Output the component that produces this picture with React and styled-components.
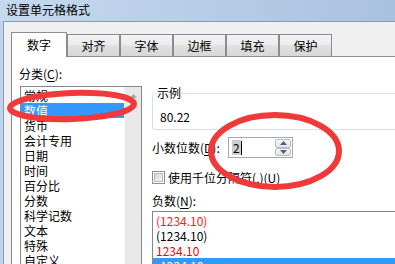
import React from "react"
import styled, { createGlobalStyle } from "styled-components"

const GlobalStyle = createGlobalStyle`
	html, body {
		margin: 0;
		padding: 0;
	}
	body {
		font-family: "Noto Sans CJK SC", "Noto Sans", sans-serif;
		font-size: 12px;
		color: #000;
	}
`

const Window = styled.div`
	position: relative;
	width: 395px;
	height: 264px;
	overflow: hidden;
	display: flex;
	flex-direction: column;
	background: #bfd4ec;
`

const TitleBar = styled.div`
	height: 21px;
	box-sizing: border-box;
	padding: 0 0 2px 6px;
	display: flex;
	align-items: center;
	line-height: 16px;
	background: linear-gradient(to right, #c6d9ee, #b6cce6 55%, #a9c2df);
`

const Client = styled.div`
	flex: 1;
	min-height: 0;
	margin-left: 3px;
	border-left: 1px solid #8a99ab;
	border-top: 1px solid #8a99ab;
	background: #f0f0f0;
	padding: 10px 0 0 7px;
	display: flex;
	flex-direction: column;
`

const TabRow = styled.div`
	position: relative;
	z-index: 1;
	height: 24px;
	display: flex;
	align-items: flex-end;
`

const Tab = styled.div`
	box-sizing: border-box;
	width: ${p => (p.$active ? 56 : 53)}px;
	height: ${p => (p.$active ? 25 : 22)}px;
	margin-bottom: ${p => (p.$active ? -1 : 0)}px;
	border: 1px solid #898c95;
	border-bottom: none;
	background: ${p =>
		p.$active ? "#fff" : "linear-gradient(#f4f4f4, #ececec 45%, #dfdfdf 55%, #d8d8d8)"};
	display: flex;
	align-items: center;
	justify-content: center;
	line-height: 16px;
`

const Panel = styled.div`
	flex: 1;
	min-height: 0;
	background: #fff;
	border-top: 1px solid #898c95;
	border-left: 1px solid #898c95;
	padding: 9px 0 0 7px;
	display: grid;
	grid-template-columns: 123px 280px;
	column-gap: 10px;
	align-items: start;
`

const Column = styled.div`
	display: flex;
	flex-direction: column;
	padding-top: ${p => p.$top || 0}px;
`

const Label = styled.div`
	line-height: 16px;
	white-space: nowrap;
	margin-top: ${p => p.$gap || 0}px;
`

const Key = styled.span`
	text-decoration: underline;
	text-underline-offset: 2px;
`

const CategoryBox = styled.div`
	box-sizing: border-box;
	width: 122px;
	height: 190px;
	margin: 4px 0 0 1px;
	border: 1px solid #828790;
	display: flex;
`

const Items = styled.div`
	flex: 1;
	padding-top: 1px;
`

const Item = styled.div`
	height: 15px;
	line-height: 15px;
	padding-left: 3px;
	white-space: nowrap;
	background: ${p => (p.$selected ? "#3399ff" : "transparent")};
	color: ${p => (p.$selected ? "#fff" : p.$color || "#000")};
`

const ScrollBar = styled.div`
	width: 17px;
	background: #e9e9e9;
	border-left: 1px solid #f4f4f4;
	box-sizing: border-box;
`

const ScrollButton = styled.div`
	height: 17px;
	display: flex;
	align-items: center;
	justify-content: center;
`

const Group = styled.fieldset`
	margin: 0;
	padding: 0 0 4px 3px;
	border: 1px solid #d5dfe5;
	border-radius: 3px;
	min-width: 0;
`

const Legend = styled.legend`
	padding: 0 1px;
	line-height: 16px;
	font-size: 12px;
`

const SampleValue = styled.div`
	padding: 8px 0 0 4px;
	line-height: 16px;
`

const FieldRow = styled.div`
	margin-top: ${p => p.$gap || 0}px;
	height: ${p => p.$h}px;
	display: flex;
	align-items: center;
`

const FieldLabel = styled.div`
	width: 76px;
	line-height: 16px;
	white-space: nowrap;
`

const SpinBox = styled.div`
	box-sizing: border-box;
	width: 65px;
	height: 21px;
	border: 1px solid #a6a8ae;
	display: flex;
	background: #fff;
`

const SpinValue = styled.div`
	flex: 1;
	padding-left: 3px;
	display: flex;
	align-items: center;
	line-height: 15px;
`

const Selected = styled.span`
	background: #cdcdcd;
	padding: 0 1px;
`

const Caret = styled.span`
	width: 1px;
	height: 14px;
	background: #000;
`

const SpinButtons = styled.div`
	width: 16px;
	padding: 1px 1px 1px 0;
	display: flex;
	flex-direction: column;
	gap: 0;
`

const SpinButton = styled.div`
	flex: 1;
	box-sizing: border-box;
	border: 1px solid #b8bcc4;
	border-radius: 2px;
	background: linear-gradient(#f6f6f6, #e4e4e4);
	display: flex;
	align-items: center;
	justify-content: center;
`

const CheckBox = styled.div`
	box-sizing: border-box;
	width: 13px;
	height: 13px;
	border: 1px solid #8e8f8f;
	padding: 1px;
	background: #fff;
	margin-right: 3px;
`

const CheckFill = styled.div`
	box-sizing: border-box;
	width: 100%;
	height: 100%;
	border: 1px solid #b8bcc2;
	background: linear-gradient(135deg, #d6d6d6, #f6f6f6);
`

const NegativeBox = styled.div`
	margin-top: 2px;
	height: 60px;
	border: 1px solid #828790;
	border-right: none;
	padding-top: 1px;
`

const Annotation = styled.svg`
	position: absolute;
	top: 0;
	left: 0;
	pointer-events: none;
`

const categories = ["常规", "数值", "货币", "会计专用", "日期", "时间", "百分比", "分数", "科学记数", "文本", "特殊", "自定义"]
const tabs = ["数字", "对齐", "字体", "边框", "填充", "保护"]
const negatives = [
	{ text: "(1234.10)", color: "#ff1a1a" },
	{ text: "(1234.10)", color: "#000" },
	{ text: "1234.10", color: "#ff0000" },
	{ text: "-1234.10", selected: true }
]

const Arrow = ({ up, color }) => (
	<svg width="7" height="4" viewBox="0 0 7 4">
		<path d={up ? "M0 4 L3.5 0 L7 4 Z" : "M0 0 L3.5 4 L7 0 Z"} fill={color} />
	</svg>
)

export default function App() {
	return (
		<Window>
			<GlobalStyle />
			<TitleBar>设置单元格格式</TitleBar>
			<Client>
				<TabRow>
					{tabs.map((t, i) => (
						<Tab key={t} $active={i === 0}>{t}</Tab>
					))}
				</TabRow>
				<Panel>
					<Column>
						<Label>分类(<Key>C</Key>):</Label>
						<CategoryBox>
							<Items>
								{categories.map(c => (
									<Item key={c} $selected={c === "数值"}>{c}</Item>
								))}
							</Items>
							<ScrollBar>
								<ScrollButton>
									<Arrow up color="#a3a3a3" />
								</ScrollButton>
							</ScrollBar>
						</CategoryBox>
					</Column>
					<Column $top={19}>
						<Group>
							<Legend>示例</Legend>
							<SampleValue>80.22</SampleValue>
						</Group>
						<FieldRow $gap={7} $h={21}>
							<FieldLabel>小数位数(<Key>D</Key>):</FieldLabel>
							<SpinBox>
								<SpinValue>
									<Selected>2</Selected>
									<Caret />
								</SpinValue>
								<SpinButtons>
									<SpinButton><Arrow up color="#4c5f86" /></SpinButton>
									<SpinButton><Arrow color="#4c5f86" /></SpinButton>
								</SpinButtons>
							</SpinBox>
						</FieldRow>
						<FieldRow $gap={13} $h={13}>
							<CheckBox><CheckFill /></CheckBox>
							<Label>使用千位分隔符(,)(<Key>U</Key>)</Label>
						</FieldRow>
						<Label $gap={9}>负数(<Key>N</Key>):</Label>
						<NegativeBox>
							{negatives.map((n, i) => (
								<Item key={i} $selected={n.selected} $color={n.color}>{n.text}</Item>
							))}
						</NegativeBox>
					</Column>
				</Panel>
			</Client>
			<Annotation width="395" height="264" viewBox="0 0 395 264">
				<ellipse cx="72" cy="106" rx="62" ry="13" fill="none" stroke="#f03a3a" strokeWidth="6" transform="rotate(-2 72 106)" />
				<ellipse cx="275" cy="151" rx="64" ry="36" fill="none" stroke="#f03a3a" strokeWidth="6" />
			</Annotation>
		</Window>
	)
}
